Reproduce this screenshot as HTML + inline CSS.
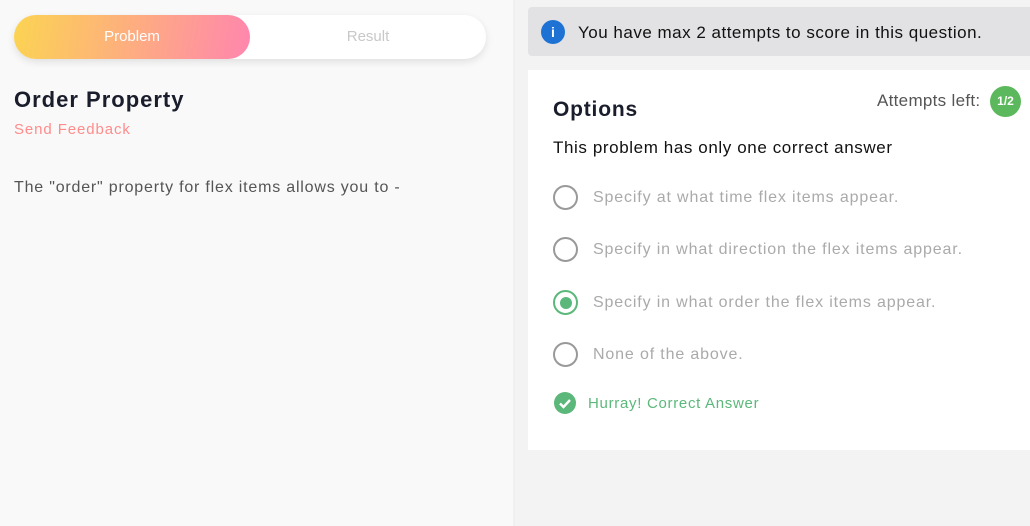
<!DOCTYPE html>
<html><head><meta charset="utf-8"><style>
*{margin:0;padding:0;box-sizing:border-box}
body{width:1030px;height:526px;overflow:hidden;font-family:"Liberation Sans",sans-serif;background:#f3f3f3;position:relative}
.left{position:absolute;left:0;top:0;width:515px;height:526px;background:#f9f9f9;border-right:2px solid #f0f0f0}
.tabs{position:absolute;left:14px;top:15px;width:472px;height:44px;border-radius:22px;background:#fff;box-shadow:0 3px 8px rgba(0,0,0,.1)}
.tab1{position:absolute;left:0;top:0;width:236px;height:44px;border-radius:22px;background:linear-gradient(100deg,#fcd452,#ff86ae);color:#fff;font-size:15px;text-align:center;line-height:44px}
.tab2{position:absolute;left:236px;top:0;width:236px;height:44px;color:#c8c8c8;font-size:15px;text-align:center;line-height:44px}
h1{position:absolute;left:14px;top:87px;font-size:22px;color:#1a1d2b;font-weight:bold;letter-spacing:1px}
.fb{position:absolute;left:14px;top:121px;font-size:15px;color:#ff8c8c;letter-spacing:.9px}
.q{position:absolute;left:14px;top:179px;font-size:16px;color:#555;letter-spacing:.8px}
.info{position:absolute;left:528px;top:7px;width:502px;height:49px;background:#e2e2e4;border-radius:4px 0 0 4px}
.info .ic{position:absolute;left:13px;top:13px;width:24px;height:24px;border-radius:50%;background:#1e72d3;color:#fff;font-weight:bold;font-size:14px;text-align:center;line-height:24px}
.info .t{position:absolute;left:50px;top:16px;font-size:17px;color:#111;letter-spacing:.5px}
.card{position:absolute;left:528px;top:70px;width:502px;height:380px;background:#fff}
.opt{position:absolute;left:25px;top:28px;font-size:21px;font-weight:bold;color:#1a1d2b;letter-spacing:.8px}
.att{position:absolute;left:349px;top:21px;font-size:17px;color:#555;letter-spacing:.3px}
.badge{position:absolute;left:462px;top:16px;width:31px;height:31px;border-radius:50%;background:#5cb85c;color:#fff;font-size:12px;font-weight:bold;text-align:center;line-height:31px}
.sub{position:absolute;left:25px;top:68px;font-size:17px;color:#111;letter-spacing:.6px}
.r{position:absolute;left:25px;width:25px;height:25px;border:2px solid #999;border-radius:50%}
.r.sel{border-color:#5cb87a}
.r.sel::after{content:"";position:absolute;left:4.5px;top:4.5px;width:12px;height:12px;border-radius:50%;background:#5cb87a}
.ot{position:absolute;left:65px;font-size:16px;color:#aaa;letter-spacing:.85px}
.ok{position:absolute;left:26px;top:322px}
.okt{position:absolute;left:60px;top:325px;font-size:15px;color:#5cb87a;letter-spacing:.7px}
</style></head><body>
<div class="left">
<div class="tabs"><div class="tab1">Problem</div><div class="tab2">Result</div></div>
<h1>Order Property</h1>
<div class="fb">Send Feedback</div>
<div class="q">The "order" property for flex items allows you to -</div>
</div>
<div class="info"><div class="ic">i</div><div class="t">You have max 2 attempts to score in this question.</div></div>
<div class="card">
<div class="opt">Options</div>
<div class="att">Attempts left:</div><div class="badge">1/2</div>
<div class="sub">This problem has only one correct answer</div>
<div class="r" style="top:115px"></div><div class="ot" style="top:119px">Specify at what time flex items appear.</div>
<div class="r" style="top:167px"></div><div class="ot" style="top:171px">Specify in what direction the flex items appear.</div>
<div class="r sel" style="top:220px"></div><div class="ot" style="top:224px">Specify in what order the flex items appear.</div>
<div class="r" style="top:272px"></div><div class="ot" style="top:276px">None of the above.</div>
<svg class="ok" width="22" height="22" viewBox="0 0 22 22"><circle cx="11" cy="11" r="11" fill="#5cb87a"/><path d="M6 11.5l3.5 3.5 6.5-7" stroke="#fff" stroke-width="2.4" fill="none"/></svg>
<div class="okt">Hurray! Correct Answer</div>
</div>
</body></html>
